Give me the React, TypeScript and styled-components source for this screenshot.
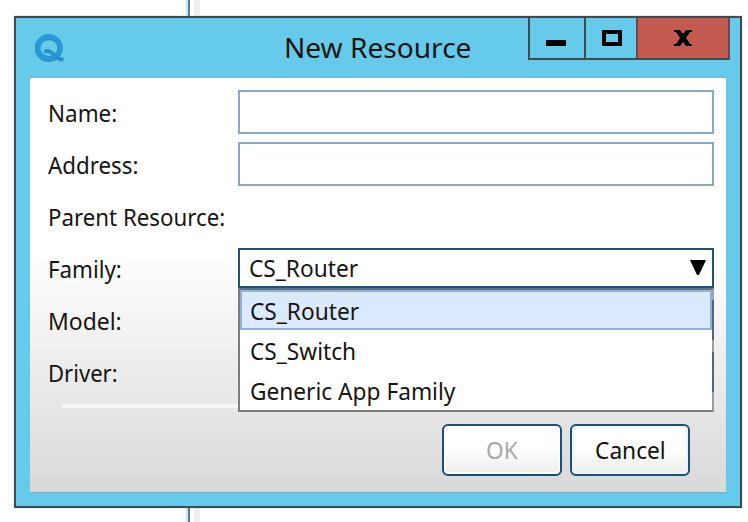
import React from "react";
import styled, { createGlobalStyle } from "styled-components";

const GlobalStyle = createGlobalStyle`
  * { box-sizing: border-box; }
  body {
    margin: 0;
    background: #fff;
    overflow: hidden;
    font-family: "Noto Sans", "Open Sans", sans-serif;
    font-size: 24px;
    color: #151515;
  }
`;

const Desktop = styled.main`
  width: 748px;
  height: 522px;
  padding: 16px 0 0 14px;
  background: linear-gradient(
    90deg,
    #fff 186px, #d5e2ef 186px, #d5e2ef 188px, #557f9f 188px, #557f9f 190px,
    #fff 190px, #fff 194px, #eee 194px, #eee 200px, #fff 200px
  );
`;

const Window = styled.section`
  width: 728px;
  height: 492px;
  border: 2px solid #404a50;
  background: #66caea;
  box-shadow: 0 0 1px #999;
`;

const TitleBar = styled.header`
  display: grid;
  grid-template-columns: 268px 244px 202px;
  height: 60px;
`;

const Logo = styled.svg`
  width: 32px;
  height: 30px;
  margin: 15px 0 0 18px;
`;

const Text = styled.span<{ $scale?: number }>`
  display: inline-block;
  white-space: nowrap;
  transform: scaleX(${(p) => p.$scale ?? 0.945});
  transform-origin: left center;
`;

const Label = styled(Text)`
  padding-top: 2px;
`;

const Title = styled.h1`
  margin: 0;
  font-size: 28px;
  font-weight: 400;
  line-height: 58px;
`;

const Controls = styled.div`
  display: grid;
  grid-template-columns: 54px 52px 92px;
  width: 202px;
  height: 42px;
  border: 2px solid #404b51;
  border-top: 0;
  border-right-color: #704449;
`;

const ControlButton = styled.button<{ $close?: boolean }>`
  display: block;
  padding: 0;
  border: 0;
  border-left: 2px solid ${(p) => (p.$close ? "#704449" : "#404b51")};
  background: ${(p) => (p.$close ? "#c25a50" : "transparent")};
  &:first-child { border-left: 0; }
  svg { display: block; }
`;

const Content = styled.div`
  width: 696px;
  height: 415px;
  margin: -1px 0 0 14px;
  padding-top: 8px;
  border-top: 1px solid #8bb1c8;
  background: linear-gradient(#fff 0, #fff 42%, #e8e8e8 77%, #d9d9d9 100%);
  box-shadow: 0 1px 1px #78aec4;
`;

const Field = styled.div`
  display: grid;
  grid-template-columns: 190px 476px;
  align-items: center;
  height: 52px;
  margin-left: 18px;
  line-height: 34px;
`;

const Input = styled.input`
  width: 476px;
  height: 44px;
  border: 2px solid #8ba9c0;
  border-radius: 0;
  background: #fff;
  outline: 0;
`;

const Combo = styled.div`
  position: relative;
  display: flex;
  align-items: center;
  justify-content: space-between;
  height: 40px;
  padding: 0 6px 0 9px;
  border: 2px solid #1d527b;
  background: #fff;
`;

const Menu = styled.div`
  position: absolute;
  z-index: 1;
  left: -2px;
  top: 38px;
  width: 476px;
  height: 124px;
  border: 2px solid #7d7d7d;
  border-top-color: #66717a;
  border-right-color: rgba(115, 115, 115, 0.65);
  background: #fff;
  background-clip: padding-box;
`;

const Option = styled.div<{ $selected?: boolean }>`
  height: 40px;
  padding-left: 8px;
  border: 2px solid ${(p) => (p.$selected ? "#8eb0df" : "transparent")};
  background: ${(p) => (p.$selected ? "#dceaff" : "#fff")};
  line-height: 38px;
`;

const Separator = styled.hr`
  width: 652px;
  height: 4px;
  margin: 6px 0 16px 32px;
  border: 0;
  background: linear-gradient(90deg, #f5f5f5, #f5f5f5 70%, transparent);
`;

const Actions = styled.footer`
  display: flex;
  gap: 8px;
  margin-left: 412px;
`;

const ActionButton = styled.button<{ $dim?: boolean }>`
  width: 120px;
  height: 52px;
  padding: 0;
  border: 2px solid #1b5077;
  border-radius: 6px;
  background: linear-gradient(#fff 48%, ${(p) => (p.$dim ? "#ebebeb" : "#eaede9")});
  box-shadow: inset 0 0 0 2px ${(p) => (p.$dim ? "#fff" : "#eaf5ff")};
  color: ${(p) => (p.$dim ? "#aaa" : "#111")};
  font: inherit;
  line-height: 48px;
  ${Text} { transform-origin: center; }
`;

const OPTIONS = ["CS_Router", "CS_Switch", "Generic App Family"];

export default function App() {
  return (
    <>
      <GlobalStyle />
      <Desktop>
        <Window>
          <TitleBar>
            <Logo viewBox="0 0 32 30" fill="none">
              <ellipse cx="14.8" cy="15.3" rx="11.3" ry="10.8" stroke="#3689ba" strokeWidth="5.4" />
              <ellipse cx="14.8" cy="14.6" rx="11.3" ry="11" stroke="#2799d8" strokeWidth="5.2" />
              <path d="M10 17C14 14.5 18 17 22 21C24 23.5 27 24.5 30 25L29 28.5C24 28.5 21 26 18 22.5C15.5 20 13 19.5 10 20.5Z" fill="#2b90c9" />
            </Logo>
            <Title><Text $scale={1.003}>New Resource</Text></Title>
            <Controls>
              <ControlButton aria-label="Minimize">
                <svg width="54" height="40"><path d="M16 22h20v6H16z" /></svg>
              </ControlButton>
              <ControlButton aria-label="Maximize">
                <svg width="50" height="40"><path d="M18 14h16v12H18z" fill="none" stroke="#000" strokeWidth="4" /></svg>
              </ControlButton>
              <ControlButton $close aria-label="Close">
                <svg width="90" height="40">
                  <path d="M36 12h6l3 4 3-4h6v2h-2l-4 6 4 6h2v2h-6l-3-4-3 4h-6v-2h2l4-6-4-6h-2z" />
                </svg>
              </ControlButton>
            </Controls>
          </TitleBar>
          <Content>
            <Field><Label $scale={0.935}>Name:</Label><Input aria-label="Name" /></Field>
            <Field><Label $scale={0.93}>Address:</Label><Input aria-label="Address" /></Field>
            <Field><Label $scale={0.928}>Parent Resource:</Label></Field>
            <Field>
              <Label $scale={0.93}>Family:</Label>
              <Combo>
                <Text>CS_Router</Text>
                <svg width="16" height="16"><path d="M0 0h16L9 15H7z" /></svg>
                <Menu>
                  {OPTIONS.map((label, i) => (
                    <Option key={label} $selected={i === 0}><Text>{label}</Text></Option>
                  ))}
                </Menu>
              </Combo>
            </Field>
            <Field><Label $scale={0.955}>Model:</Label><Combo /></Field>
            <Field><Label $scale={0.92}>Driver:</Label><Combo /></Field>
            <Separator />
            <Actions>
              <ActionButton $dim disabled><Text>OK</Text></ActionButton>
              <ActionButton><Text>Cancel</Text></ActionButton>
            </Actions>
          </Content>
        </Window>
      </Desktop>
    </>
  );
}
